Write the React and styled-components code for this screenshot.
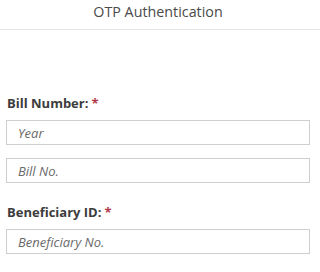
import React from 'react'
import styled, { createGlobalStyle } from 'styled-components'

const GlobalStyle = createGlobalStyle`
  html, body {
    margin: 0;
    padding: 0;
    background: #ffffff;
    font-family: 'Open Sans', 'Liberation Sans', sans-serif;
  }
`

const Page = styled.div`
  width: 320px;
  height: 272px;
  overflow: hidden;
  background: #fff;
`

const Header = styled.header`
  height: 30px;
  border-bottom: 1px solid #e6e6e6;
  display: flex;
  align-items: center;
  justify-content: center;
  box-sizing: border-box;
  padding-bottom: 6px;
  padding-right: 4px;
  font-size: 14.3px;
  color: #4a4a4a;
`

const Form = styled.form`
  display: flex;
  flex-direction: column;
  padding: 64px 10px 0 6px;
`

const Group = styled.div`
  display: flex;
  flex-direction: column;
  gap: 13px;
  margin-bottom: ${({ $last }) => ($last ? '0' : '20px')};
`

const Label = styled.label`
  font-size: 13px;
  font-weight: 700;
  color: #3c3c3c;
  padding-left: 1px;
  line-height: 18px;
  margin-bottom: -5px;
`

const Req = styled.span`
  color: #b0394a;
  margin-left: 3px;
`

const Input = styled.input`
  box-sizing: border-box;
  width: 304px;
  height: 25px;
  border: 1px solid #cfcfcf;
  border-radius: 0;
  padding: 0 11px;
  font-family: inherit;
  font-size: 13px;
  font-style: italic;
  outline: none;
  &::placeholder {
    color: #6a6a6a;
    opacity: 1;
  }
`

export default function App() {
  return (
    <Page>
      <GlobalStyle />
      <Header>OTP Authentication</Header>
      <Form>
        <Group>
          <Label>Bill Number:<Req>*</Req></Label>
          <Input placeholder='Year' />
          <Input placeholder='Bill No.' />
        </Group>
        <Group $last>
          <Label>Beneficiary ID:<Req>*</Req></Label>
          <Input placeholder='Beneficiary No.' />
        </Group>
      </Form>
    </Page>
  )
}
